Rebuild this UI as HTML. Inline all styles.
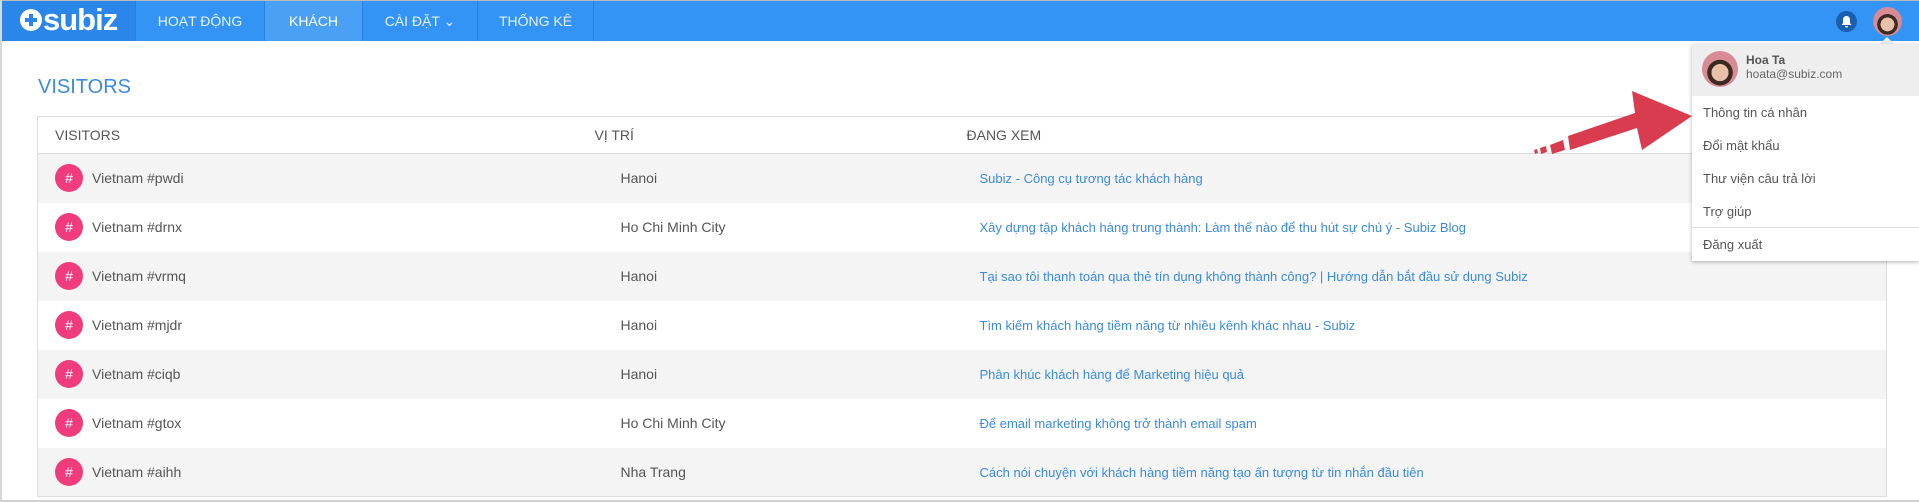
<!DOCTYPE html>
<html><head><meta charset="utf-8"><style>
*{box-sizing:border-box;margin:0;padding:0}
body{width:1919px;height:502px;overflow:hidden;background:#fff;font-family:"Liberation Sans Narrow","Liberation Sans",sans-serif;color:#555;position:relative;border-left:2px solid #d8d8d8;border-bottom:2px solid #d0d0d0}
.nav{position:absolute;left:0;top:0;width:1919px;height:41px;background:#3394f5;border-top:1px solid #bbb}
.logo{position:absolute;left:0;top:0;width:133px;height:40px;background:#2a86e8;color:#fff;font:bold 31px "Liberation Sans",sans-serif;padding:0 0 0 18px;line-height:38px;letter-spacing:-1px}
.logo span{display:inline-block;width:22px;height:22px;border-radius:50%;background:#fff;vertical-align:-1px;position:relative;margin-right:1px}
.logo span:before{content:"";position:absolute;left:5px;top:9px;width:12px;height:4px;background:#2a86e8}
.logo span:after{content:"";position:absolute;left:9px;top:5px;width:4px;height:12px;background:#2a86e8}
.ni{position:absolute;top:0;height:40px;line-height:40px;text-align:center;color:#e6f1ff;font-size:14px;border-right:1px solid #2a7fd6}
.bell{position:absolute;left:1834px;top:10px;width:21px;height:21px;border-radius:50%;background:#1a5fae}
.av{position:absolute;border-radius:50%;background:radial-gradient(circle at 50% 60%,#e8c0a8 0 30%,#3a2a22 31% 45%,#d88a95 46%)}
table{position:absolute;left:35px;top:116px;width:1850px;border-collapse:collapse;border:1px solid #ddd;font-size:14px}
th{height:37px;text-align:left;font-weight:normal;color:#555;border-bottom:1px solid #ddd}
td{height:49px;vertical-align:middle}
tr.g td{background:#f4f4f4}
.c{display:inline-block;width:28px;height:28px;border-radius:50%;background:#f03c7c;color:#fff;text-align:center;line-height:28px;font-size:14px;margin-right:9px;vertical-align:middle}
.n{vertical-align:middle}
a{color:#3a8ae0;text-decoration:none;font-size:13px}
.dd{position:absolute;left:1690px;top:44px;width:227px;height:217px;background:#fff;box-shadow:0 1px 4px rgba(0,0,0,.3)}
.dh{height:52px;background:#eee;position:relative}
.it{height:33px;line-height:33px;padding-left:11px;font-size:13px;color:#555}
</style></head><body>
<div class="nav">
<div class="logo"><span></span>subiz</div>
<div class="ni" style="left:133px;width:130px;border-left:1px solid #2a7fd6">HOẠT ĐỘNG</div>
<div class="ni" style="left:263px;width:98px;background:#4aa0f5;color:#fff">KHÁCH</div>
<div class="ni" style="left:361px;width:115px">CÀI ĐẶT ⌄</div>
<div class="ni" style="left:476px;width:116px">THỐNG KÊ</div>
<div class="bell"><svg width="21" height="21" viewBox="0 0 21 21"><path d="M10.5 5c-2.5 0-3.5 2-3.5 4v3l-1.5 2h10l-1.5-2v-3c0-2-1-4-3.5-4z M9 15a1.5 1.5 0 0 0 3 0z" fill="#fff"/></svg></div>
<div class="av" style="left:1871px;top:6px;width:29px;height:29px"></div>
</div>
<div style="position:absolute;left:36px;top:76px;font:20px 'Liberation Sans',sans-serif;color:#3a8ae0">VISITORS</div>
<table>
<tr><th style="width:557px;padding-left:17px">VISITORS</th><th style="width:372px;padding-left:0">VỊ TRÍ</th><th style="padding-left:0">ĐANG XEM</th></tr>
<tr class="g"><td style="padding-left:17px"><span class="c">#</span><span class="n">Vietnam #pwdi</span></td><td style="padding-left:26px">Hanoi</td><td style="padding-left:13px"><a>Subiz - Công cụ tương tác khách hàng</a></td></tr>
<tr><td style="padding-left:17px"><span class="c">#</span><span class="n">Vietnam #drnx</span></td><td style="padding-left:26px">Ho Chi Minh City</td><td style="padding-left:13px"><a>Xây dựng tập khách hàng trung thành: Làm thế nào để thu hút sự chú ý - Subiz Blog</a></td></tr>
<tr class="g"><td style="padding-left:17px"><span class="c">#</span><span class="n">Vietnam #vrmq</span></td><td style="padding-left:26px">Hanoi</td><td style="padding-left:13px"><a>Tại sao tôi thanh toán qua thẻ tín dụng không thành công? | Hướng dẫn bắt đầu sử dụng Subiz</a></td></tr>
<tr><td style="padding-left:17px"><span class="c">#</span><span class="n">Vietnam #mjdr</span></td><td style="padding-left:26px">Hanoi</td><td style="padding-left:13px"><a>Tìm kiếm khách hàng tiềm năng từ nhiều kênh khác nhau - Subiz</a></td></tr>
<tr class="g"><td style="padding-left:17px"><span class="c">#</span><span class="n">Vietnam #ciqb</span></td><td style="padding-left:26px">Hanoi</td><td style="padding-left:13px"><a>Phân khúc khách hàng để Marketing hiệu quả</a></td></tr>
<tr><td style="padding-left:17px"><span class="c">#</span><span class="n">Vietnam #gtox</span></td><td style="padding-left:26px">Ho Chi Minh City</td><td style="padding-left:13px"><a>Để email marketing không trở thành email spam</a></td></tr>
<tr class="g"><td style="padding-left:17px"><span class="c">#</span><span class="n">Vietnam #aihh</span></td><td style="padding-left:26px">Nha Trang</td><td style="padding-left:13px"><a>Cách nói chuyện với khách hàng tiềm năng tạo ấn tượng từ tin nhắn đầu tiên</a></td></tr>
</table>
<div style="position:absolute;left:1878px;top:37px;width:0;height:0;border:7px solid transparent;border-bottom-color:#eee;border-top:0"></div>
<div class="dd">
<div class="dh"><div class="av" style="left:10px;top:7px;width:36px;height:36px"></div>
<div style="position:absolute;left:54px;top:9px;font-size:12px;font-weight:bold;color:#555">Hoa Ta</div>
<div style="position:absolute;left:54px;top:23px;font-size:12px;color:#666">hoata@subiz.com</div></div>
<div class="it">Thông tin cá nhân</div>
<div class="it">Đổi mật khẩu</div>
<div class="it">Thư viện câu trả lời</div>
<div class="it" style="border-bottom:1px solid #ddd">Trợ giúp</div>
<div class="it">Đăng xuất</div>
</div>
<svg style="position:absolute;left:1530px;top:88px" width="165" height="70" viewBox="0 0 165 70">
<path d="M38 62 L105 40 L110 62 L160 28 L100 3 L103 25 L36 48 Z" fill="#d83c4e"/>
<path d="M20 66 L33 62 L31 52 L18 57Z M9 66 L15 64 L14 58 L8 60Z M3 66 L6 65 L5 61 L2 62Z" fill="#d83c4e"/>
</svg>
</body></html>
